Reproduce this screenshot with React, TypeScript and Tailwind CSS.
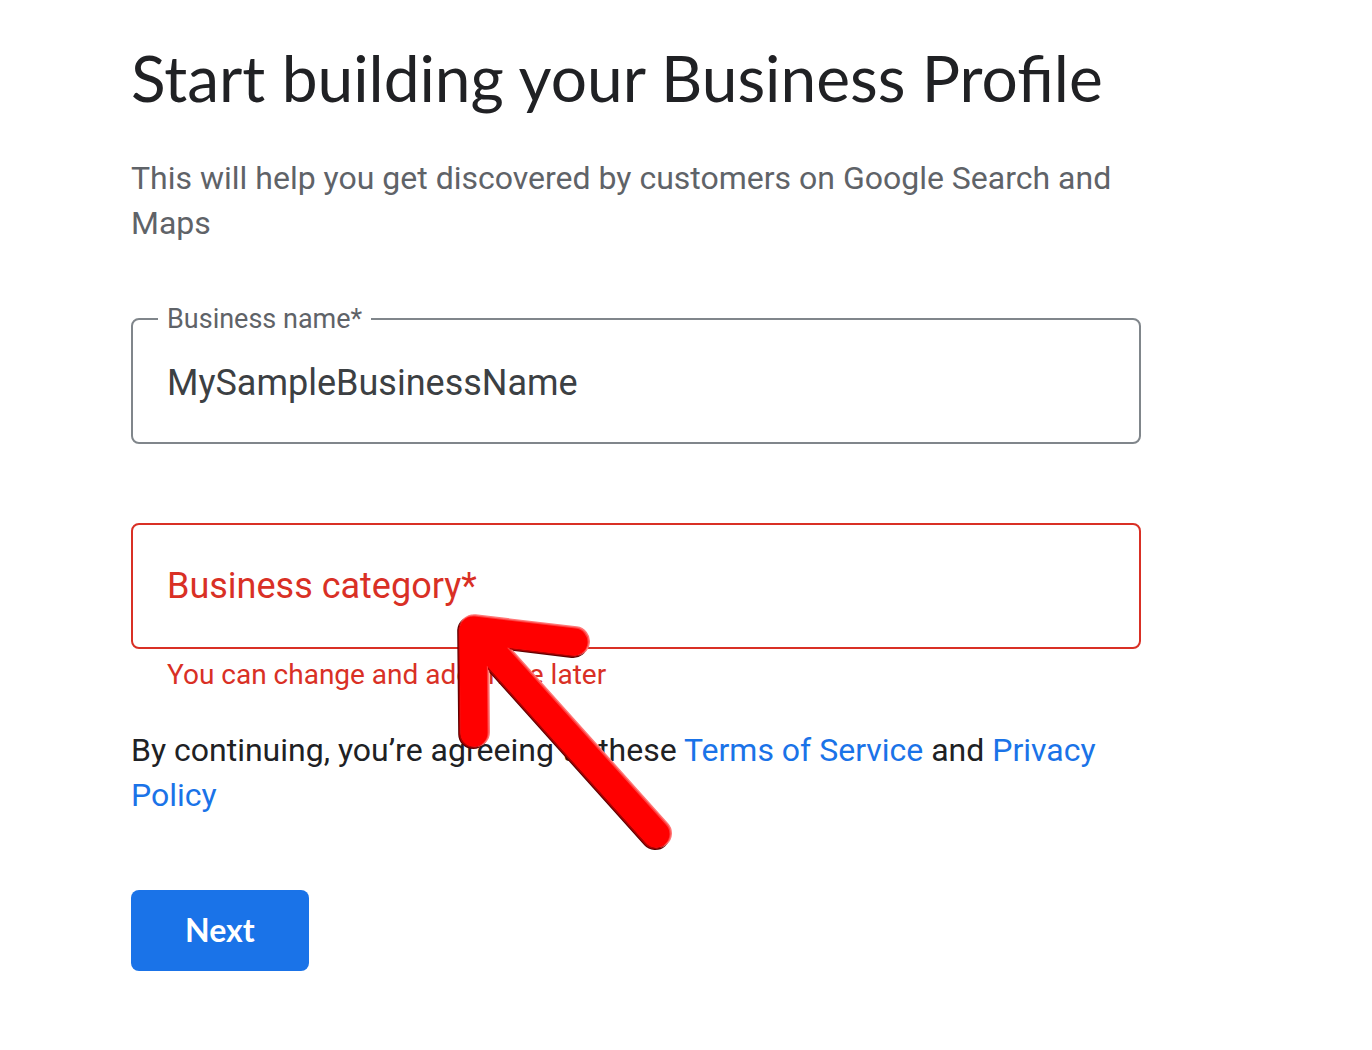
import { useState } from 'react';

const ARROW_PATH = 'M119 31 L18 19 L19 122 M18 19 L201 223';

function PointerArrow() {
  return (
    <svg
      className="pointer-events-none absolute top-[88px] left-[324px] h-[242px] w-[220px]"
      viewBox="0 0 220 242"
      fill="none"
      aria-hidden="true"
    >
      <g strokeLinecap="round" strokeLinejoin="round">
        <path d={ARROW_PATH} stroke="#5c0000" strokeWidth="30" transform="translate(-0.8 1)" />
        <path d={ARROW_PATH} stroke="#ff7878" strokeWidth="30" transform="translate(1 -0.8)" />
        <path d={ARROW_PATH} stroke="#b00000" strokeWidth="28" transform="translate(-0.8 0.8)" />
        <path d={ARROW_PATH} stroke="#ff3c3c" strokeWidth="28" transform="translate(0.6 -0.6)" />
        <path d={ARROW_PATH} stroke="#ff0000" strokeWidth="27" />
      </g>
    </svg>
  );
}

export default function App() {
  const [name, setName] = useState('MySampleBusinessName');
  const [category, setCategory] = useState('');

  return (
    <main className="min-h-screen bg-white px-[131px] pt-[38px] pb-20 font-[Roboto,sans-serif] text-[#202124]">
      <form className="max-w-[1010px]" onSubmit={(e) => e.preventDefault()}>
        <h1 className="font-[Lato,sans-serif] text-[64px] leading-[80px] whitespace-nowrap">
          Start building your Business Profile
        </h1>
        <p className="mt-[38px] text-[32px] leading-[45px] text-[#5f6368]">
          This will help you get discovered by customers on Google Search and Maps
        </p>

        <fieldset className="mt-[57px] rounded-lg border-2 border-[#80868b] px-[25px]">
          <legend className="px-[9px] text-[27px] leading-8 text-[#5f6368]">
            <label htmlFor="business-name">Business name*</label>
          </legend>
          <input
            id="business-name"
            className="block h-[107px] w-full px-[9px] pb-3 text-[36px] text-[#3c4043] outline-none"
            value={name}
            onChange={(e) => setName(e.target.value)}
          />
        </fieldset>

        <div className="relative mt-[79px]">
          <input
            id="business-category"
            className="block h-[126px] w-full rounded-lg border-2 border-[#d93025] px-[34px] text-[36px] text-[#3c4043] outline-none"
            value={category}
            onChange={(e) => setCategory(e.target.value)}
            aria-invalid="true"
            aria-describedby="category-help"
          />
          {!category && (
            <label
              htmlFor="business-category"
              className="pointer-events-none absolute inset-x-0 top-0 flex h-[126px] items-center px-9 text-[36px] text-[#d93025]"
            >
              Business category*
            </label>
          )}
          <p id="category-help" className="mt-2 px-9 text-[28px] leading-9 text-[#d93025]">
            You can change and add more later
          </p>
          <PointerArrow />
        </div>

        <p className="mt-[35px] text-[32px] leading-[45px]">
          By continuing, you’re agreeing to these{' '}
          <a href="#terms" className="text-[#1a73e8]">Terms of Service</a> and{' '}
          <a href="#privacy" className="text-[#1a73e8]">Privacy Policy</a>
        </p>

        <button
          type="submit"
          className="mt-[72px] h-[81px] rounded-lg bg-[#1a73e8] px-[54px] pb-0.5 font-[Lato,sans-serif] text-[32px] font-bold text-white"
        >
          Next
        </button>
      </form>
    </main>
  );
}
